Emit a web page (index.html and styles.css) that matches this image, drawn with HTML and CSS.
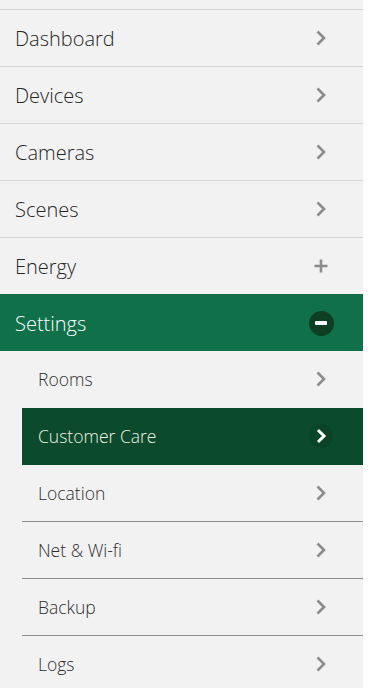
FILE: index.html
```html
<!DOCTYPE html>
<html>
<head>
<meta charset="utf-8">
<link rel="stylesheet" href="styles.css">
</head>
<body>
<nav class="menu">
  <div class="item"><span class="label">Dashboard</span><span class="icon"><svg width="12" height="16" viewBox="0 0 12 16"><polyline points="2.5,1.5 9,8 2.5,14.5" class="chev"/></svg></span></div>
  <div class="item"><span class="label">Devices</span><span class="icon"><svg width="12" height="16" viewBox="0 0 12 16"><polyline points="2.5,1.5 9,8 2.5,14.5" class="chev"/></svg></span></div>
  <div class="item"><span class="label">Cameras</span><span class="icon"><svg width="12" height="16" viewBox="0 0 12 16"><polyline points="2.5,1.5 9,8 2.5,14.5" class="chev"/></svg></span></div>
  <div class="item"><span class="label">Scenes</span><span class="icon"><svg width="12" height="16" viewBox="0 0 12 16"><polyline points="2.5,1.5 9,8 2.5,14.5" class="chev"/></svg></span></div>
  <div class="item"><span class="label">Energy</span><span class="icon"><svg width="16" height="16" viewBox="0 0 16 16"><path d="M8 1.5V14.5M1.5 8H14.5" class="plus"/></svg></span></div>
  <div class="item open"><span class="label">Settings</span><span class="icon"><span class="minus"></span></span></div>
  <div class="sub"><span class="label">Rooms</span><span class="icon"><svg width="12" height="16" viewBox="0 0 12 16"><polyline points="2.5,1.5 9,8 2.5,14.5" class="chev"/></svg></span></div>
  <div class="sub active"><span class="label">Customer Care</span><span class="icon"><span class="dot"><svg width="12" height="16" viewBox="0 0 12 16"><polyline points="3,2 9,8 3,14" class="chev-w"/></svg></span></span></div>
  <div class="sub sep"><span class="label">Location</span><span class="icon"><svg width="12" height="16" viewBox="0 0 12 16"><polyline points="2.5,1.5 9,8 2.5,14.5" class="chev"/></svg></span></div>
  <div class="sub sep"><span class="label">Net &amp; Wi-fi</span><span class="icon"><svg width="12" height="16" viewBox="0 0 12 16"><polyline points="2.5,1.5 9,8 2.5,14.5" class="chev"/></svg></span></div>
  <div class="sub sep"><span class="label">Backup</span><span class="icon"><svg width="12" height="16" viewBox="0 0 12 16"><polyline points="2.5,1.5 9,8 2.5,14.5" class="chev"/></svg></span></div>
  <div class="sub sep"><span class="label">Logs</span><span class="icon"><svg width="12" height="16" viewBox="0 0 12 16"><polyline points="2.5,1.5 9,8 2.5,14.5" class="chev"/></svg></span></div>
</nav>
</body>
</html>
```

FILE: styles.css
```css
html, body {
  margin: 0;
  padding: 0;
  background: #ffffff;
}
body {
  font-family: "Open Sans", "Noto Sans", sans-serif;
  font-weight: 300;
}
.menu {
  width: 363px;
  background: #f2f2f2;
  padding-top: 9px;
  min-height: 700px;
}
.item {
  display: flex;
  align-items: center;
  justify-content: space-between;
  height: 56px;
  border-top: 1px solid #d6d6d6;
  padding-left: 15px;
  font-size: 20px;
  color: #262626;
}
.item.open {
  background: #0f704a;
  border-top-color: #0f704a;
  color: #ffffff;
}
.sub {
  display: flex;
  align-items: center;
  justify-content: space-between;
  height: 56px;
  margin-left: 22px;
  padding-left: 16px;
  border-bottom: 1px solid transparent;
  font-size: 17.5px;
  color: #2e2e2e;
}
.sub.sep {
  border-bottom-color: #8e8e8e;
}
.sub.active {
  background: #0b4a2c;
  border-bottom-color: #0b4a2c;
  color: #eef3e2;
}
.icon {
  width: 26px;
  height: 26px;
  margin-right: 29px;
  display: flex;
  align-items: center;
  justify-content: center;
}
.chev {
  fill: none;
  stroke: #8c8c8c;
  stroke-width: 2.6;
}
.chev-w {
  fill: none;
  stroke: #ffffff;
  stroke-width: 3;
}
.plus {
  fill: none;
  stroke: #8c8c8c;
  stroke-width: 2.6;
}
.minus {
  width: 25px;
  height: 25px;
  border-radius: 50%;
  background: #0c3f24;
  display: flex;
  align-items: center;
  justify-content: center;
}
.minus::before {
  content: "";
  width: 12px;
  height: 4px;
  border-radius: 1px;
  background: #ffffff;
}
.dot {
  width: 24px;
  height: 24px;
  border-radius: 50%;
  background: #0a4427;
  display: flex;
  align-items: center;
  justify-content: center;
}
```
